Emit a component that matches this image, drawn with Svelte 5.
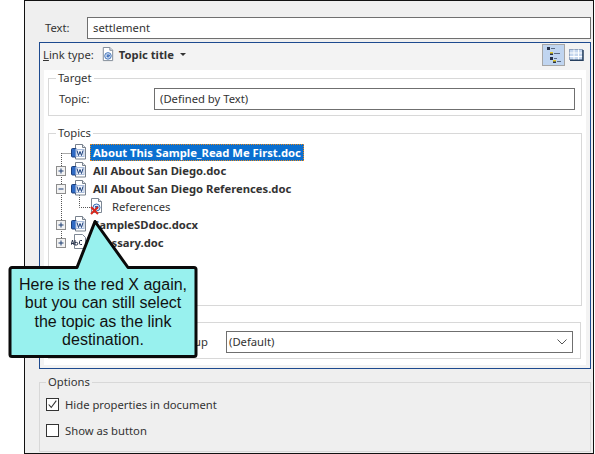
<script>
  const topics = [
    { name: 'About This Sample_Read Me First.doc', icon: 'word', selected: true },
    { name: 'All About San Diego.doc', icon: 'word', toggle: '+' },
    { name: 'All About San Diego References.doc', icon: 'word', toggle: '-' },
    { name: 'References', icon: 'topic', child: true },
    { name: 'SampleSDdoc.docx', icon: 'word', toggle: '+' },
    { name: 'Glossary.doc', icon: 'abc', toggle: '+' }
  ]
</script>

{#snippet page()}
  <path d="M3.5 .5h7l3 3v11h-10z" fill="#fff" stroke="#7d8794" />
  <path d="M10.5 .5v3h3" fill="#e4e8ee" stroke="#7d8794" />
{/snippet}

{#snippet docIcon(kind)}
  {#if kind === 'word'}
    <svg class="doc" viewBox="0 0 16 16" width="16" height="16">
      <path d="M4.500 .5h7l3 3v11.500h-10z" fill="#fff" stroke="#77808c" />
      <path d="M11.500 .5v3h3" fill="#e4e8ee" stroke="#77808c" />
      <rect x=".5" y="4.500" width="5" height="8.500" rx="1" fill="#2f6ac4" stroke="#1b3f7c" />
      <rect x="5" y="5.500" width="8" height="7" fill="#eef3fb" stroke="#a9bcdb" />
      <path d="M6 6.500l1.500 5 1.500-4 1.500 4 1.500-5" fill="none" stroke="#1b3f7c" />
    </svg>
  {:else if kind === 'abc'}
    <svg class="doc" viewBox="0 0 16 16" width="16" height="16">
      <path d="M3.500 .5h8l3 3v11h-11z" fill="#fff" stroke="#7d8794" />
      <path d="M0 11l1.500-5 1.500 5M.7 9.500h1.700M4 6v5h1.500a1.200 1.200 0 0 0 0-2.600H4M11 6.500H9.500a1 1 0 0 0-1 1v2a1 1 0 0 0 1 1H11" fill="none" stroke="#26314a" />
    </svg>
  {:else}
    <svg class="doc" viewBox="0 0 16 16" width="16" height="16">
      {@render page()}
      <circle cx="8.500" cy="9.500" r="3.500" fill="#dfe9f7" stroke="#3a6fb8" />
      <path d="M7 8.500h3v1H7.500v1H10" fill="none" stroke="#2a5fb4" />
    </svg>
  {/if}
{/snippet}

<div class="window">
  <div class="text-row">
    <span class="text-label">Text:</span>
    <div class="field grow">settlement</div>
  </div>

  <div class="panel">
    <div class="toolbar">
      <span><u>L</u>ink type:</span>
      <svg class="type-icon" viewBox="0 0 16 16" width="15" height="15">
        {@render page()}
        <circle cx="8.500" cy="9.500" r="3.500" fill="#dfe9f7" stroke="#3a6fb8" />
        <path d="M7 8.500h3v1H7.500v1H10" fill="none" stroke="#2a5fb4" />
      </svg>
      <b class="type-name">Topic title</b>
      <span class="caret"></span>
      <div class="views">
        <div class="view-btn on">
          <svg viewBox="0 0 16 18" width="16" height="18">
            <path d="M1 1h3v3H1zM4 6h3v3H4zM4 11h3v3H4zM7 14h3v3H7z" fill="#27324a" />
            <path d="M4 6h3v1.500H4zM7 14h3v1.500H7z" fill="#e2c92d" />
            <path d="M5 2.500h4M8 7.500h6M8 12.500h3M11 15.500h4" stroke="#5a6a85" />
          </svg>
        </div>
        <svg class="grid-icon" viewBox="0 0 15 12" width="15" height="12">
          <rect x=".5" y=".5" width="13" height="10" fill="#c5d6ee" stroke="#8fa2bd" />
          <path d="M5 .5v10M9.500 .5v10M.5 4h13M.5 7.500h13" stroke="#fff" />
          <path d="M14 1v10.500H1" fill="none" stroke="#27405f" stroke-width="1.500" />
        </svg>
      </div>
    </div>

    <div class="panel-body">
      <fieldset class="target">
        <legend>Target</legend>
        <span class="topic-label">Topic:</span>
        <div class="field grow">(Defined by Text)</div>
      </fieldset>

      <fieldset class="topics">
        <legend>Topics</legend>
        <div class="tree">
          <svg class="tree-lines" width="60" height="110">
            <path d="M12.500 13V102M12.500 13.500H22M30.500 51v16.500H41" fill="none" stroke="#555" stroke-dasharray="1 1" />
          </svg>
          {#each topics as t}
            <div class="tree-row" class:child={t.child}>
              {#if t.toggle}
                <span class="toggle">
                  <svg viewBox="0 0 8 8" width="8" height="8">
                    <path d="M1.500 4h5" stroke="#1f3f73" />
                    {#if t.toggle === '+'}<path d="M4 1.500v5" stroke="#1f3f73" />{/if}
                  </svg>
                </span>
              {/if}
              {@render docIcon(t.icon)}
              <span class="tree-text" class:selected={t.selected}>{t.name}</span>
            </div>
          {/each}
          <svg class="red-x" viewBox="0 0 9 9" width="9" height="9">
            <path d="M1 1l7 7M8 1L1 8" stroke="#d9261c" stroke-width="2" />
          </svg>
        </div>
      </fieldset>

      <fieldset class="group">
        <legend>&nbsp;</legend>
        <span class="group-label">Related topics popup</span>
        <div class="field grow select">
          (Default)
          <svg viewBox="0 0 10 6" width="10" height="6"><path d="M.5 .5l4.500 4.500 4.500-4.500" fill="none" stroke="#555" /></svg>
        </div>
      </fieldset>
    </div>
  </div>

  <fieldset class="options">
    <legend>Options</legend>
    <label class="check">
      <span class="box">
        <svg viewBox="0 0 13 13" width="11" height="11"><path d="M2 6.500l3 3.500 6-8" fill="none" stroke="#333" stroke-width="1.300" /></svg>
      </span>
      Hide properties in document
    </label>
    <label class="check">
      <span class="box"></span>
      Show as button
    </label>
  </fieldset>
</div>

<div class="callout">
  <svg width="190" height="142" viewBox="0 0 190 142">
    <path d="M4 49.500H69L87 3.500 120 49.500H186a2 2 0 0 1 2 2V136.500a2 2 0 0 1-2 2H4a2 2 0 0 1-2-2V51.500a2 2 0 0 1 2-2z" fill="#98f1ee" stroke="#0a0a0a" stroke-width="3" stroke-linejoin="round" />
  </svg>
  <p>Here is the red X again, but you can still select the topic as the link destination.</p>
</div>

<style>
  :global(body) {
    margin: 0;
    background: #fff;
  }
  .window {
    box-sizing: border-box;
    width: 570px;
    height: 454px;
    margin-left: 24px;
    padding: 16px 2px 1px 14px;
    background: #efefef;
    border: 1px solid #111;
    font: 11.25px "Noto Sans", "Open Sans", sans-serif;
    color: #333;
  }
  .text-row {
    display: flex;
    align-items: center;
    height: 22px;
  }
  .text-label {
    width: 48px;
    padding: 0 0 2px 6px;
    box-sizing: border-box;
  }
  .field {
    box-sizing: border-box;
    height: 22px;
    line-height: 20px;
    padding: 0 5px;
    background: #fff;
    border: 1px solid #6f6f6f;
  }
  .grow {
    flex: 1;
  }
  .panel {
    box-sizing: border-box;
    height: 327px;
    margin-top: 3px;
    background: #f3f3f3;
    border: 1px solid #1d4a8f;
  }
  .toolbar {
    box-sizing: border-box;
    display: flex;
    align-items: center;
    height: 27px;
    padding: 0 0 5px 3px;
  }
  .type-icon {
    margin-left: 6px;
  }
  .type-name {
    margin-left: 4px;
  }
  .caret {
    margin-left: 6px;
    border: 3px solid transparent;
    border-top-color: #333;
    border-bottom: 0;
  }
  .views {
    margin: 2px 6px 0 auto;
    display: flex;
    align-items: center;
    gap: 4px;
  }
  .view-btn {
    box-sizing: border-box;
    width: 23px;
    height: 22px;
    display: flex;
    align-items: center;
    justify-content: center;
    background: #c0d5f0;
    border: 1px solid #a6a6a6;
  }
  .panel-body {
    box-sizing: border-box;
    height: 295px;
    margin: 0 4px;
    padding: 1px 4px 0;
    background: #fff;
  }
  fieldset {
    margin: 0;
    padding: 0;
    min-width: 0;
    border: 1px solid #d8d8d8;
    box-sizing: border-box;
  }
  legend {
    padding: 0 2px;
    margin-left: 7px;
    line-height: 14px;
  }
  .target {
    display: flex;
    align-items: center;
    height: 45px;
    padding: 3px 6px 6px 0;
  }
  .topic-label {
    width: 105px;
    padding-left: 10px;
    box-sizing: border-box;
  }
  .topics {
    height: 180px;
    margin-top: 10px;
  }
  .tree {
    position: relative;
    padding: 3px 0 0 22px;
  }
  .tree-lines {
    position: absolute;
    left: 0;
    top: 0;
  }
  .tree-row {
    position: relative;
    display: flex;
    align-items: center;
    height: 18px;
    font-weight: 700;
  }
  .tree-row.child {
    padding-left: 17px;
    font-weight: 400;
  }
  .toggle {
    position: absolute;
    left: -15px;
    top: 5px;
    width: 8px;
    height: 8px;
    background: #f2f2f2;
    border: 1px solid #8d8d8d;
    display: flex;
  }
  .tree-text {
    box-sizing: border-box;
    margin-left: 3px;
    height: 17px;
    line-height: 15px;
    padding: 0 2px;
    border: 1px solid transparent;
  }
  .tree-row.child .tree-text {
    margin-left: 5px;
  }
  .tree-text.selected {
    color: #fff;
    background: #0a6fd0;
    border: 1px dotted #e8891c;
  }
  .red-x {
    position: absolute;
    left: 41px;
    top: 66px;
  }
  .group {
    display: flex;
    align-items: center;
    height: 44px;
    margin: 9px 1px 0 0;
    padding: 2px 7px 6px 0;
  }
  .group-label {
    width: 159px;
    text-align: right;
    white-space: nowrap;
    margin-right: 18px;
  }
  .select {
    display: flex;
    align-items: center;
    justify-content: space-between;
    padding-right: 5px;
    padding-left: 2px;
  }
  .options {
    height: 77px;
    margin-top: 6px;
    padding: 8px 0 0 0;
  }
  .options legend {
    margin-left: 6px;
  }
  .check {
    display: flex;
    align-items: center;
    gap: 6px;
    height: 14px;
    margin: 0 0 12px 6px;
  }
  .box {
    box-sizing: border-box;
    width: 13px;
    height: 13px;
    background: #fff;
    border: 1px solid #333;
    display: flex;
    align-items: center;
    justify-content: center;
  }
  .callout {
    position: absolute;
    left: 8px;
    top: 218px;
    width: 190px;
    height: 142px;
  }
  .callout svg {
    display: block;
  }
  .callout p {
    position: absolute;
    left: 10px;
    top: 58px;
    width: 170px;
    margin: 0;
    text-align: center;
    font: 16px/18.300px "Liberation Sans", Arial, sans-serif;
    color: #111;
  }
</style>
